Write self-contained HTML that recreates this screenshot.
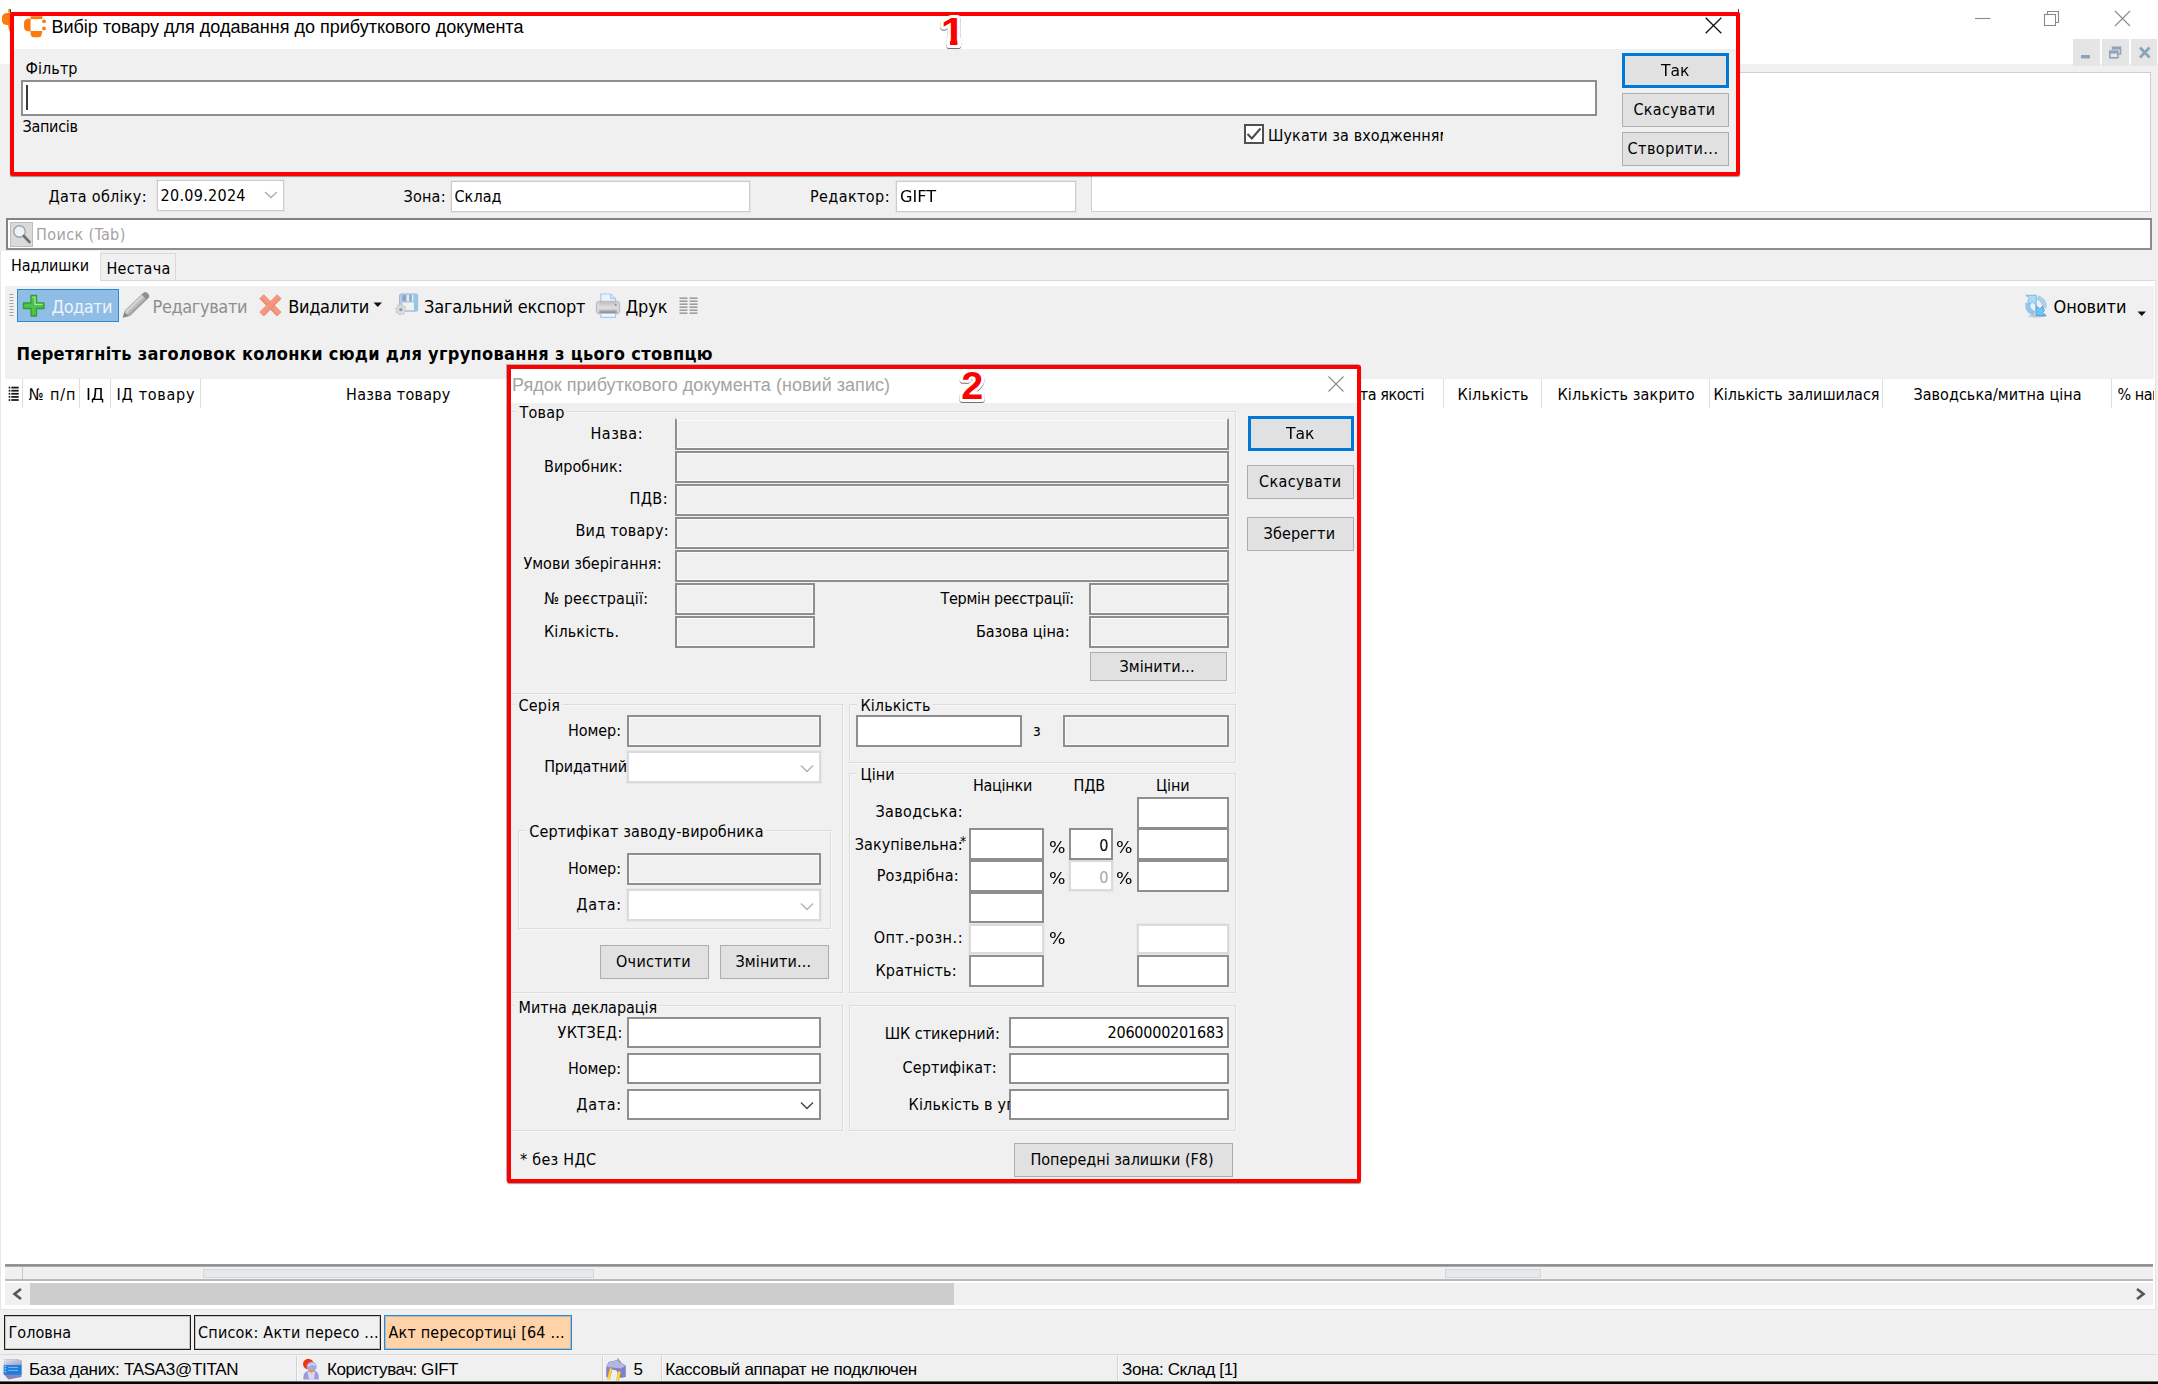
<!DOCTYPE html>
<html lang="uk"><head><meta charset="utf-8"><title>Акт пересортиці</title>
<style>
html,body{margin:0;padding:0}
body{width:2158px;height:1384px;overflow:hidden;background:#f0f0f0;position:relative;font-family:"DejaVu Sans Condensed","DejaVu Sans","Liberation Sans",sans-serif;font-stretch:condensed}
#main,#d1,#d2{position:absolute;left:0;top:0;width:2158px;height:1384px;overflow:hidden}
#main div,#d1 div,#d2 div{position:absolute;box-sizing:border-box}
svg{position:absolute;overflow:visible}
.t{white-space:pre;line-height:20px;height:20px}
.btn{background:#e1e1e1;border:1px solid #adadad}
.btnf{background:#e1e1e1;border:3px solid #0078d7}
.ro{background:#f0f0f0;border:2px solid #8e8e8e;box-shadow:inset 0 0 0 1px #fbfbfb}
.ed{background:#fff;border:2px solid #8e8e8e}
.edl{background:#fff;border:1px solid #cbcbcb;box-shadow:0 0 0 1px rgba(0,0,0,.035)}
#d2 .edl{border:2px solid #dbdbdb}
.grp{border:1px solid #dcdcdc;box-shadow:inset 1px 1px 0 rgba(255,255,255,.45), 1px 1px 0 rgba(255,255,255,.45)}
.gl{background:#f0f0f0}
.num{font-family:'Liberation Sans',sans-serif;font-weight:bold;color:#fe0000;-webkit-text-stroke:6px #fff;paint-order:stroke fill;filter:drop-shadow(0 1px .5px rgba(0,0,0,.5))}

</style></head>
<body>
<div id="main">
<div style="left:0px;top:0px;width:2158px;height:64px;background:#fff"></div>
<svg style="left:1px;top:8px" width="12" height="36" viewBox="0 0 12 36" fill="#ff7a0e"><path d="M9 5 V17 H5 Q1 16 1 12.500 V9.500 Q1 6 5 5 Z"/><path d="M7.200 17 H9 V23.500 Q7.500 22 7.200 17 Z"/><path d="M7.500 1 H9 V4.500 H7.200 Z"/></svg>
<div style="left:10px;top:9px;width:1px;height:4px;background:#444"></div>
<div style="left:1738px;top:9px;width:1px;height:4px;background:#444"></div>
<svg style="left:1970px;top:6px" width="170" height="26" viewBox="0 0 170 26" fill="none" stroke="#8a8a8a" stroke-width="1.1"><path d="M5 12.5 H20.5"/><path d="M77.5 8.5 V5.5 H88.5 V16.5 H85.5"/><rect x="74.500" y="8.5" width="11" height="11"/><path d="M145 5 L160 20 M160 5 L145 20"/></svg>
<div style="left:2073px;top:39px;width:27px;height:27px;background:#e5e5e5"></div>
<div style="left:2102px;top:39px;width:27px;height:27px;background:#e5e5e5"></div>
<div style="left:2131px;top:39px;width:26px;height:27px;background:#e5e5e5"></div>
<svg style="left:2073px;top:39px" width="84" height="27" viewBox="0 0 84 27"><rect x="8" y="16" width="9" height="3.4" fill="#8ea2b8"/><g fill="none" stroke="#8ea2b8" stroke-width="1.6"><path d="M39.500 10.500 V8.200 H47.500 V15 H45.500"/><path d="M39.500 9.300 H47.500" stroke-width="2.6"/><rect x="36.800" y="12.200" width="8" height="6.600"/><path d="M36.800 13.200 H44.800" stroke-width="2.600"/></g><path d="M67 8.500 L76.500 18.500 M76.500 8.500 L67 18.500" stroke="#8ea2b8" stroke-width="2.800" fill="none"/></svg>
<div style="left:1091px;top:72px;width:1060px;height:140px;background:#fff;border:1px solid #cfcfcf"></div>
<div class="edl" style="left:157px;top:180px;width:127px;height:31px;"></div>
<svg style="left:264px;top:191px" width="14" height="8" viewBox="0 0 14 8"><path d="M1 1 L7 6.500 L13 1" fill="none" stroke="#ababab" stroke-width="1.300"/></svg>
<div class="edl" style="left:451px;top:181px;width:299px;height:31px;"></div>
<div class="edl" style="left:896px;top:181px;width:180px;height:31px;"></div>
<div style="left:6px;top:218px;width:2146px;height:32px;background:#fff;border:2px solid #8c8c8c;border-top-color:#838383;border-left-color:#838383"></div>
<div style="left:10px;top:222px;width:23px;height:25px;background:#dadada;border:1px solid #bdbdbd"></div>
<svg style="left:12px;top:224px" width="20" height="21" viewBox="0 0 20 21"><circle cx="7.500" cy="7.500" r="5.800" fill="#eef3fb" stroke="#9aa3ad" stroke-width="1.400"/><path d="M11.800 12 L17.500 18" stroke="#6f6f6f" stroke-width="2.600" stroke-linecap="round"/></svg>
<div style="left:1px;top:251px;width:99px;height:31px;background:#fff"></div>
<div style="left:100px;top:253px;width:76px;height:28px;background:#f0f0f0;border:1px solid #d9d9d9;border-bottom:none"></div>
<div style="left:100px;top:280px;width:2055px;height:1px;background:#d9d9d9"></div>
<div style="left:0px;top:281px;width:2155px;height:1028px;background:#fff"></div>
<div style="left:0px;top:251px;width:1px;height:1058px;background:#e6e6e6"></div>
<div style="left:2155px;top:281px;width:1px;height:1029px;background:#e3e3e3"></div>
<div style="left:0px;top:1309px;width:2156px;height:1px;background:#e3e3e3"></div>
<div style="left:5px;top:286px;width:2149px;height:93px;background:#f0f0f0"></div>
<svg style="left:9px;top:293px" width="6" height="24" viewBox="0 0 6 24"><rect x="0.500" y="1" width="4" height="1" fill="#a2a2a2"/><rect x="0.500" y="4" width="4" height="1" fill="#a2a2a2"/><rect x="0.500" y="7" width="4" height="1" fill="#a2a2a2"/><rect x="0.500" y="10" width="4" height="1" fill="#a2a2a2"/><rect x="0.500" y="13" width="4" height="1" fill="#a2a2a2"/><rect x="0.500" y="16" width="4" height="1" fill="#a2a2a2"/><rect x="0.500" y="19" width="4" height="1" fill="#a2a2a2"/><rect x="0.500" y="22" width="4" height="1" fill="#a2a2a2"/></svg>
<div style="left:17px;top:289px;width:102px;height:33px;background:#8fbde6;border:1px solid #2a8ad4"></div>
<svg style="left:22px;top:294px" width="24" height="24" viewBox="0 0 24 24"><path d="M9 1.500 H14.500 V9 H22 V14.500 H14.500 V22 H9 V14.500 H1.500 V9 H9 Z" fill="#4fc24a" stroke="#2f9e2f" stroke-width="1.300" stroke-linejoin="round"/><path d="M10.300 3 H13 V10.300 H20.500" fill="none" stroke="#a6e89f" stroke-width="1.200"/></svg>
<svg style="left:0;top:0" width="10" height="10"><defs><linearGradient id="pg" x1="0" y1="0" x2="0" y2="1"><stop offset="0" stop-color="#e4e4e4"/><stop offset="1" stop-color="#9c9c9c"/></linearGradient></defs><g transform="translate(123.200 317.200) rotate(-43.800)"><path d="M0 0 L6 -3.400 H30.500 Q34 -3.400 34 0 Q34 3.400 30.500 3.400 H6 Z" fill="url(#pg)" stroke="#9b9b9b" stroke-width=".900"/><path d="M0 0 L4.500 -2.500 V2.500 Z" fill="#858585"/><path d="M29 -3.400 H30.500 Q34 -3.400 34 0 Q34 3.400 30.500 3.400 H29 Z" fill="#8e8e8e"/></g></svg>
<svg style="left:0;top:0" width="10" height="10"><defs><linearGradient id="xg" gradientUnits="userSpaceOnUse" x1="0" y1="295" x2="0" y2="316"><stop offset="0" stop-color="#fdb5a0"/><stop offset="1" stop-color="#ee7660"/></linearGradient></defs><g fill="url(#xg)" stroke="#ea8470" stroke-width=".800"><rect x="258.150" y="302.650" width="24.500" height="5.500" transform="rotate(45 270.400 305.400)"/><rect x="258.150" y="302.650" width="24.500" height="5.500" transform="rotate(-45 270.400 305.400)"/></g></svg>
<svg style="left:373px;top:302px" width="10" height="6" viewBox="0 0 10 6"><path d="M0.500 0.500 H9 L4.750 5 Z" fill="#111"/></svg>
<svg style="left:394px;top:292px" width="26" height="26" viewBox="0 0 26 26" opacity=".820"><rect x="5.500" y="1.900" width="18.200" height="17.300" rx="1.600" fill="#a9c4e2" stroke="#95a6cc" stroke-width=".900"/><rect x="20.300" y="2.500" width="3" height="16.300" fill="#72c4e8"/><rect x="8.300" y="3" width="11.200" height="6.300" fill="#6f9bc8"/><rect x="12.500" y="3" width="2.700" height="6.300" fill="#ececec"/><rect x="17.800" y="3" width="1.500" height="6.300" fill="#e6eef6"/><rect x="8.300" y="10.600" width="11.500" height="7.600" fill="#f3f3f3"/><circle cx="6.800" cy="17.600" r="5" fill="#cfd3d6" stroke="#b9bec3" stroke-width="1.200" stroke-dasharray="2.200 1.600"/><circle cx="6.800" cy="17.600" r="3.700" fill="#d4d8db"/><circle cx="6.800" cy="17.600" r="1.700" fill="#5b8fc2"/></svg>
<svg style="left:595px;top:292px" width="27" height="27" viewBox="0 0 27 27"><defs><linearGradient id="prg" x1="0" y1="0" x2="0" y2="1"><stop offset="0" stop-color="#bcbcbc"/><stop offset=".550" stop-color="#e2e2e2"/><stop offset=".700" stop-color="#c4c4c4"/><stop offset=".920" stop-color="#7e7e7e"/><stop offset="1" stop-color="#c8c8c8"/></linearGradient></defs><path d="M5.800 10 V2 H15.500 L20.500 6.500 V10 Z" fill="#e9f3fd" stroke="#a7c9ee" stroke-width="1.200"/><path d="M15.500 2 V6.500 H20.500" fill="#cfe2f6" stroke="#a7c9ee" stroke-width="1"/><rect x="1.300" y="9.300" width="23.400" height="12.600" rx="3.200" fill="#d9d9d9" stroke="#b4b4b4" stroke-width="1"/><rect x="4.300" y="9.300" width="17.400" height="12.400" fill="url(#prg)"/><circle cx="20.800" cy="12.700" r="1" fill="#8a8a8a"/><path d="M5.800 21.300 H20.500 V25.300 H5.800 Z" fill="#edf5fe" stroke="#a7c9ee" stroke-width="1.200"/></svg>
<svg style="left:679px;top:297px" width="20" height="18" viewBox="0 0 20 18"><rect x="0.500" y="0.5" width="8" height="1.300" fill="#8c8c8c"/><rect x="10.500" y="0.5" width="8" height="1.300" fill="#8c8c8c"/><rect x="0.500" y="3.5" width="8" height="1.300" fill="#8c8c8c"/><rect x="10.500" y="3.5" width="8" height="1.300" fill="#8c8c8c"/><rect x="0.500" y="6.5" width="8" height="1.300" fill="#8c8c8c"/><rect x="10.500" y="6.5" width="8" height="1.300" fill="#8c8c8c"/><rect x="0.500" y="9.5" width="8" height="1.300" fill="#8c8c8c"/><rect x="10.500" y="9.5" width="8" height="1.300" fill="#8c8c8c"/><rect x="0.500" y="12.5" width="8" height="1.300" fill="#8c8c8c"/><rect x="10.500" y="12.5" width="8" height="1.300" fill="#8c8c8c"/><rect x="0.500" y="15.5" width="8" height="1.300" fill="#8c8c8c"/><rect x="10.500" y="15.5" width="8" height="1.300" fill="#8c8c8c"/></svg>
<svg style="left:2023px;top:293px" width="26" height="25" viewBox="0 0 26 25"><ellipse cx="14" cy="23" rx="9" ry="1.400" fill="#c9c9c9"/><path d="M11.500 20.500 Q3.500 17.500 5 10" fill="none" stroke="#93c4ec" stroke-width="5"/><path d="M2.800 2.300 H13.200 V12.300 L9.300 9 L6.800 11.500 L4.500 7.500 L6.500 5.500 Z" fill="#a8dcfb" stroke="#7fb6e6" stroke-width="1"/><path d="M14.500 4.500 Q22.500 7.500 21 15" fill="none" stroke="#93c4ec" stroke-width="5" opacity=".750"/><path d="M23.200 22.700 H13 V12.700 L16.800 16 L19.300 13.500 L21.500 17.500 L19.500 19.500 Z" fill="#66c9fb" stroke="#5d97cf" stroke-width="1"/></svg>
<svg style="left:2137px;top:311px" width="10" height="6" viewBox="0 0 10 6"><path d="M0.500 0.500 H9 L4.750 5 Z" fill="#111"/></svg>
<div style="left:22px;top:379px;width:1px;height:29px;background:#dedede"></div>
<div style="left:79px;top:379px;width:1px;height:29px;background:#dedede"></div>
<div style="left:110px;top:379px;width:1px;height:29px;background:#dedede"></div>
<div style="left:200px;top:379px;width:1px;height:29px;background:#dedede"></div>
<div style="left:594px;top:379px;width:1px;height:29px;background:#dedede"></div>
<div style="left:1443px;top:379px;width:1px;height:29px;background:#dedede"></div>
<div style="left:1541px;top:379px;width:1px;height:29px;background:#dedede"></div>
<div style="left:1709px;top:379px;width:1px;height:29px;background:#dedede"></div>
<div style="left:1882px;top:379px;width:1px;height:29px;background:#dedede"></div>
<div style="left:2111px;top:379px;width:1px;height:29px;background:#dedede"></div>
<svg style="left:8px;top:386px" width="12" height="16" viewBox="0 0 12 16"><rect x="3.300" y="0.70" width="7.400" height="1.800" fill="#1a1a1a"/><rect x="0.700" y="0.70" width="1.600" height="1.800" fill="#1a1a1a"/><rect x="3.300" y="3.80" width="7.400" height="1.800" fill="#1a1a1a"/><rect x="0.700" y="3.80" width="1.600" height="1.800" fill="#1a1a1a"/><rect x="3.300" y="6.90" width="7.400" height="1.800" fill="#1a1a1a"/><rect x="0.700" y="6.90" width="1.600" height="1.800" fill="#1a1a1a"/><rect x="3.300" y="10.00" width="7.400" height="1.800" fill="#1a1a1a"/><rect x="0.700" y="10.00" width="1.600" height="1.800" fill="#1a1a1a"/><rect x="3.300" y="13.10" width="7.400" height="1.800" fill="#1a1a1a"/><rect x="0.700" y="13.10" width="1.600" height="1.800" fill="#1a1a1a"/></svg>
<div style="left:5px;top:1264px;width:2148px;height:3px;background:linear-gradient(#9a9a9a,#8a8a8a 60%,#c4c4c4)"></div>
<div style="left:5px;top:1267px;width:2148px;height:12px;background:#f0f0f0"></div>
<div style="left:22px;top:1267px;width:1px;height:12px;background:#c9c9c9"></div>
<div style="left:203px;top:1269px;width:391px;height:9px;background:#e6e9eb;border:1px solid #d3d7da"></div>
<div style="left:1445px;top:1269px;width:96px;height:9px;background:#e6e9eb;border:1px solid #d3d7da"></div>
<div style="left:5px;top:1279px;width:2148px;height:2px;background:#b9b9b9"></div>
<div style="left:5px;top:1283px;width:2148px;height:22px;background:#f0f0f0"></div>
<div style="left:30px;top:1283px;width:924px;height:22px;background:#cdcdcd"></div>
<svg style="left:12px;top:1288px" width="11" height="12" viewBox="0 0 11 12"><path d="M9 1 L2.500 6 L9 11" fill="none" stroke="#555" stroke-width="2.600"/></svg>
<svg style="left:2135px;top:1288px" width="11" height="12" viewBox="0 0 11 12"><path d="M2 1 L8.500 6 L2 11" fill="none" stroke="#555" stroke-width="2.600"/></svg>
<div style="left:4px;top:1315px;width:187px;height:35px;background:#f0f0f0;border:1px solid #1c1c1c;box-shadow:inset 0 0 0 1px rgba(0,0,0,.18)"></div>
<div style="left:194px;top:1315px;width:187px;height:35px;background:#f0f0f0;border:1px solid #1c1c1c;box-shadow:inset 0 0 0 1px rgba(0,0,0,.18)"></div>
<div style="left:384px;top:1315px;width:188px;height:35px;background:#ffd2a8;border:1px solid #2a8ad4;box-shadow:inset 0 0 0 1px rgba(42,138,212,.35)"></div>
<div style="left:0px;top:1354px;width:2158px;height:1px;background:#dadada"></div>
<div style="left:296px;top:1356px;width:1px;height:25px;background:#d2d2d2"></div>
<div style="left:297px;top:1356px;width:1px;height:25px;background:#fafafa"></div>
<div style="left:602px;top:1356px;width:1px;height:25px;background:#d2d2d2"></div>
<div style="left:603px;top:1356px;width:1px;height:25px;background:#fafafa"></div>
<div style="left:661px;top:1356px;width:1px;height:25px;background:#d2d2d2"></div>
<div style="left:662px;top:1356px;width:1px;height:25px;background:#fafafa"></div>
<div style="left:1117px;top:1356px;width:1px;height:25px;background:#d2d2d2"></div>
<div style="left:1118px;top:1356px;width:1px;height:25px;background:#fafafa"></div>
<svg style="left:3px;top:1359px" width="20" height="22" viewBox="0 0 20 22"><defs><linearGradient id="dbt" x1="0" y1="0" x2="1" y2="1"><stop offset="0" stop-color="#e4e4fa"/><stop offset="1" stop-color="#9c9cb4"/></linearGradient></defs><path d="M1 0.600 L14.500 0.300 L18.500 1.600 V18 L5.500 20.600 L0.600 15 Z" fill="#8c80bc"/><path d="M1 0.600 L14.500 0.300 L18.500 1.600 V6.500 H1 Z" fill="url(#dbt)"/><rect x="0.800" y="6" width="17.700" height="9.700" fill="#1b7fe0"/><path d="M5 8.400 H15 M5 11.400 H15" stroke="#9bb0de" stroke-width="1"/><path d="M1.500 7.300 H3.300 M1.500 10 H3.300 M1.500 12.700 H3.300" stroke="#cfe4fb" stroke-width="1.100"/></svg>
<svg style="left:301px;top:1357px" width="20" height="24" viewBox="0 0 20 24"><circle cx="7.300" cy="7" r="5.300" fill="#ee3510"/><path d="M2.300 22.500 Q2 14.500 7 14 H14 Q18.300 14.500 17.800 22.500 Z" fill="#9a9ce0"/><path d="M6.500 15 H14 L13 22.500 H8 Z" fill="#d8d8f4"/><circle cx="10.700" cy="9.800" r="5" fill="#a3a9e6"/><path d="M7 9 Q10.500 5.500 14 8" stroke="#d4dcfa" stroke-width="1.600" fill="none"/><path d="M7.300 12.500 Q10.500 11.500 13.500 12.500 L10.300 16.500 Z" fill="#f0983e"/></svg>
<svg style="left:605px;top:1357px" width="23" height="24" viewBox="0 0 23 24"><path d="M1.300 10 L3.500 5 L12 3 L20.800 8.500 V20 L15 21 L11.500 13.500 L7.500 12.500 L4 21 L1.300 20 Z" fill="#7f80c6"/><path d="M2 10 L3.800 5.300 L12 3.300 L20.500 8.700 L16 11.500 Z" fill="#b4b6e2"/><path d="M12.500 1.500 L15.500 5.500" stroke="#666" stroke-width="1"/><path d="M6 11.500 L3.500 22.500" stroke="#f3b81c" stroke-width="3"/><path d="M6 11.500 L3.500 22.500" stroke="#fbe96a" stroke-width="1.100"/><path d="M14.500 14.500 L12.500 23.500" stroke="#f3b81c" stroke-width="3"/><path d="M14.500 14.500 L12.500 23.500" stroke="#fbe96a" stroke-width="1.100"/></svg>
<div style="left:0px;top:1381px;width:2158px;height:1px;background:#6a6a6a"></div>
<div style="left:0px;top:1382px;width:2158px;height:2px;background:#000"></div>
<div class="t" style="left:48.5px;top:187px;font-size:16px;font-family:'DejaVu Sans Condensed','DejaVu Sans','Liberation Sans',sans-serif;color:#000;letter-spacing:0.291px;">Дата обліку:</div>
<div class="t" style="left:160.5px;top:185.5px;font-size:16px;font-family:'DejaVu Sans Condensed','DejaVu Sans','Liberation Sans',sans-serif;color:#000;letter-spacing:0.29px;">20.09.2024</div>
<div class="t" style="left:403.5px;top:187px;font-size:16px;font-family:'DejaVu Sans Condensed','DejaVu Sans','Liberation Sans',sans-serif;color:#000;letter-spacing:0.219px;">Зона:</div>
<div class="t" style="left:454.5px;top:187px;font-size:16px;font-family:'DejaVu Sans Condensed','DejaVu Sans','Liberation Sans',sans-serif;color:#000;letter-spacing:0.066px;">Склад</div>
<div class="t" style="left:810.0px;top:187px;font-size:16px;font-family:'DejaVu Sans Condensed','DejaVu Sans','Liberation Sans',sans-serif;color:#000;letter-spacing:0.414px;">Редактор:</div>
<div class="t" style="left:899.5px;top:187px;font-size:16px;font-family:'DejaVu Sans Condensed','DejaVu Sans','Liberation Sans',sans-serif;color:#000;transform:scaleX(1.118);transform-origin:0 0;">GIFT</div>
<div class="t" style="left:36.1px;top:225px;font-size:16px;font-family:'DejaVu Sans Condensed','DejaVu Sans','Liberation Sans',sans-serif;color:#a3a3a3;letter-spacing:0.365px;">Поиск (Tab)</div>
<div class="t" style="left:11.1px;top:256px;font-size:16px;font-family:'DejaVu Sans Condensed','DejaVu Sans','Liberation Sans',sans-serif;color:#000;letter-spacing:-0.211px;">Надлишки</div>
<div class="t" style="left:106.5px;top:258.75px;font-size:16px;font-family:'DejaVu Sans Condensed','DejaVu Sans','Liberation Sans',sans-serif;color:#000;letter-spacing:0.268px;">Нестача</div>
<div class="t" style="left:51.5px;top:297.0px;font-size:18px;font-family:'DejaVu Sans Condensed','DejaVu Sans','Liberation Sans',sans-serif;color:#eef4fb;letter-spacing:-0.528px;">Додати</div>
<div class="t" style="left:152.5px;top:297.0px;font-size:18px;font-family:'DejaVu Sans Condensed','DejaVu Sans','Liberation Sans',sans-serif;color:#8e8e8e;letter-spacing:-0.373px;">Редагувати</div>
<div class="t" style="left:288.25px;top:297.0px;font-size:18px;font-family:'DejaVu Sans Condensed','DejaVu Sans','Liberation Sans',sans-serif;color:#000;letter-spacing:-0.368px;">Видалити</div>
<div class="t" style="left:424.1px;top:297.0px;font-size:18px;font-family:'DejaVu Sans Condensed','DejaVu Sans','Liberation Sans',sans-serif;color:#000;letter-spacing:-0.18px;">Загальний експорт</div>
<div class="t" style="left:625.5px;top:297.0px;font-size:18px;font-family:'DejaVu Sans Condensed','DejaVu Sans','Liberation Sans',sans-serif;color:#000;letter-spacing:-0.104px;">Друк</div>
<div class="t" style="left:2053.5px;top:297.0px;font-size:18px;font-family:'DejaVu Sans Condensed','DejaVu Sans','Liberation Sans',sans-serif;color:#000;letter-spacing:-0.044px;">Оновити</div>
<div class="t" style="left:16.5px;top:343.9px;font-size:18px;font-family:'DejaVu Sans Condensed','DejaVu Sans','Liberation Sans',sans-serif;color:#000;font-weight:bold;letter-spacing:0.324px;">Перетягніть заголовок колонки сюди для угруповання з цього стовпцю</div>
<div class="t" style="left:28.5px;top:385px;font-size:16px;font-family:'DejaVu Sans Condensed','DejaVu Sans','Liberation Sans',sans-serif;color:#000;letter-spacing:0.941px;">№ п/п</div>
<div class="t" style="left:85.5px;top:385px;font-size:16px;font-family:'DejaVu Sans Condensed','DejaVu Sans','Liberation Sans',sans-serif;color:#000;transform:scaleX(1.161);transform-origin:0 0;">ІД</div>
<div class="t" style="left:116.5px;top:385px;font-size:16px;font-family:'DejaVu Sans Condensed','DejaVu Sans','Liberation Sans',sans-serif;color:#000;letter-spacing:0.723px;">ІД товару</div>
<div class="t" style="left:346.1px;top:385px;font-size:16px;font-family:'DejaVu Sans Condensed','DejaVu Sans','Liberation Sans',sans-serif;color:#000;letter-spacing:0.257px;">Назва товару</div>
<div class="t" style="left:1340.5px;top:385px;font-size:16px;font-family:'DejaVu Sans Condensed','DejaVu Sans','Liberation Sans',sans-serif;color:#000;letter-spacing:-0.43px;">Дата якості</div>
<div class="t" style="left:1457.5px;top:385px;font-size:16px;font-family:'DejaVu Sans Condensed','DejaVu Sans','Liberation Sans',sans-serif;color:#000;letter-spacing:0.201px;">Кількість</div>
<div class="t" style="left:1557.5px;top:385px;font-size:16px;font-family:'DejaVu Sans Condensed','DejaVu Sans','Liberation Sans',sans-serif;color:#000;letter-spacing:0.137px;">Кількість закрито</div>
<div class="t" style="left:1713.5px;top:385px;font-size:16px;font-family:'DejaVu Sans Condensed','DejaVu Sans','Liberation Sans',sans-serif;color:#000;letter-spacing:-0.006px;">Кількість залишилася</div>
<div class="t" style="left:1913.5px;top:385px;font-size:16px;font-family:'DejaVu Sans Condensed','DejaVu Sans','Liberation Sans',sans-serif;color:#000;letter-spacing:0.027px;">Заводська/митна ціна</div>
<div class="t" style="left:2117.5px;top:385px;font-size:16px;font-family:'DejaVu Sans Condensed','DejaVu Sans','Liberation Sans',sans-serif;color:#000;letter-spacing:-0.469px;width:36px;overflow:hidden;">% націнки</div>
<div class="t" style="left:8.5px;top:1322.5px;font-size:16px;font-family:'DejaVu Sans Condensed','DejaVu Sans','Liberation Sans',sans-serif;color:#000;letter-spacing:0.031px;">Головна</div>
<div class="t" style="left:198.0px;top:1322.5px;font-size:16px;font-family:'DejaVu Sans Condensed','DejaVu Sans','Liberation Sans',sans-serif;color:#000;letter-spacing:0.214px;">Список: Акти пересо ...</div>
<div class="t" style="left:388.5px;top:1322.5px;font-size:16px;font-family:'DejaVu Sans Condensed','DejaVu Sans','Liberation Sans',sans-serif;color:#000;letter-spacing:0.185px;">Акт пересортиці [64 ...</div>
<div class="t" style="left:29.0px;top:1360px;font-size:17px;font-family:'Liberation Sans',sans-serif;color:#000;letter-spacing:-0.309px;">База даних: TASA3@TITAN</div>
<div class="t" style="left:327.0px;top:1360px;font-size:17px;font-family:'Liberation Sans',sans-serif;color:#000;letter-spacing:-0.449px;">Користувач: GIFT</div>
<div class="t" style="left:633.5px;top:1360px;font-size:17px;font-family:'Liberation Sans',sans-serif;color:#000;">5</div>
<div class="t" style="left:665.25px;top:1360px;font-size:17px;font-family:'Liberation Sans',sans-serif;color:#000;letter-spacing:-0.258px;">Кассовый аппарат не подключен</div>
<div class="t" style="left:1122.0px;top:1360px;font-size:17px;font-family:'Liberation Sans',sans-serif;color:#000;letter-spacing:-0.382px;">Зона: Склад [1]</div>
</div>
<div id="d1">
<div style="left:14px;top:16px;width:1722px;height:33px;background:#fff"></div>
<div style="left:14px;top:49px;width:1722px;height:123px;background:#f0f0f0"></div>
<div style="left:10px;top:12px;width:1730px;height:164px;border-radius:2px;border:4px solid #fe0000;box-shadow:0 1px 1px rgba(30,60,60,.5)"></div>
<svg style="left:23px;top:15px" width="24" height="24" viewBox="0 0 24 24" fill="#ff7a0e"><path d="M7.600 3.800 V16.200 H4.500 Q1 15.500 1 12 V8 Q1 4.500 4.500 3.800 Z"/><rect x="7.500" y="1.200" width="11.800" height="2.900"/><path d="M7.300 16 H19.300 L18.600 20 Q18 22.200 16 22.200 H10.500 Q8.200 22.200 7.800 20 Z"/><circle cx="21" cy="6.300" r="1.900"/><circle cx="21" cy="13.500" r="1.900"/></svg>
<svg style="left:1705px;top:17px" width="17" height="17" viewBox="0 0 17 17"><path d="M0.700 0.700 L16.300 16.300 M16.300 0.700 L0.700 16.300" stroke="#111" stroke-width="1.300" fill="none"/></svg>
<svg style="left:920px;top:0" width="80" height="60" viewBox="0 0 80 60"><defs><clipPath id="k1a"><path d="M-10 -40 H40 V-7.800 H17.800 V0.200 Q17.800 3.200 14.800 3.200 H8 Q5 3.200 5 0.200 V-7.800 H-10 Z"/></clipPath><clipPath id="k1b"><path d="M-10 -40 H40 V-4.600 H14.600 V1 H8.200 V-4.600 H-10 Z"/></clipPath></defs><g style="filter:drop-shadow(0 1px .5px rgba(0,0,0,.55))" font-family="Liberation Sans, sans-serif" font-weight="bold" font-size="38"><g transform="translate(20.640 45) scale(1.150 1)"><text x="0" y="0" fill="#fff" stroke="#fff" stroke-width="6" stroke-linejoin="round" clip-path="url(#k1a)">1</text></g></g><g font-family="Liberation Sans, sans-serif" font-weight="bold" font-size="38"><g transform="translate(20.640 45) scale(1.150 1)"><text x="0" y="0" fill="#fe0000" clip-path="url(#k1b)">1</text></g></g></svg>
<div class="ed" style="left:21px;top:80px;width:1576px;height:36px;"></div>
<div style="left:26px;top:85px;width:2px;height:25px;background:#3a3a3a"></div>
<div style="left:1244px;top:124px;width:20px;height:20px;background:#fff;border:2px solid #505050"></div>
<svg style="left:1246px;top:127px" width="16" height="14" viewBox="0 0 16 14"><path d="M1.500 7 L5.800 11.500 L14.500 1.500" fill="none" stroke="#4a4a4a" stroke-width="2"/></svg>
<div class="btnf" style="left:1622px;top:53px;width:107px;height:35px;"></div>
<div class="btn" style="left:1622px;top:93px;width:107px;height:34px;"></div>
<div class="btn" style="left:1622px;top:132px;width:107px;height:34px;"></div>
<div class="t" style="left:51.5px;top:17px;font-size:18px;font-family:'Liberation Sans',sans-serif;color:#000;">Вибір товару для додавання до прибуткового документа</div>
<div class="t" style="left:25.5px;top:59px;font-size:16px;font-family:'DejaVu Sans Condensed','DejaVu Sans','Liberation Sans',sans-serif;color:#000;letter-spacing:0.078px;">Фільтр</div>
<div class="t" style="left:22.5px;top:116.5px;font-size:16px;font-family:'DejaVu Sans Condensed','DejaVu Sans','Liberation Sans',sans-serif;color:#000;letter-spacing:-0.286px;">Записів</div>
<div class="t" style="left:1268.0px;top:125.5px;font-size:16px;font-family:'DejaVu Sans Condensed','DejaVu Sans','Liberation Sans',sans-serif;color:#000;letter-spacing:0.091px;width:174.5px;overflow:hidden;">Шукати за входженням</div>
<div class="t" style="left:1660.5px;top:61px;font-size:16px;font-family:'DejaVu Sans Condensed','DejaVu Sans','Liberation Sans',sans-serif;color:#000;transform:scaleX(1.083);transform-origin:0 0;">Так</div>
<div class="t" style="left:1633.5px;top:100px;font-size:16px;font-family:'DejaVu Sans Condensed','DejaVu Sans','Liberation Sans',sans-serif;color:#000;letter-spacing:0.307px;">Скасувати</div>
<div class="t" style="left:1627.5px;top:138.75px;font-size:16px;font-family:'DejaVu Sans Condensed','DejaVu Sans','Liberation Sans',sans-serif;color:#000;letter-spacing:0.483px;">Створити...</div>
</div>
<div id="d2">
<div style="left:511px;top:369px;width:846px;height:34px;background:#fff"></div>
<div style="left:511px;top:403px;width:846px;height:777px;background:#f0f0f0"></div>
<svg style="left:1328px;top:376px" width="16" height="16" viewBox="0 0 16 16"><path d="M0.500 0.500 L15.500 15.500 M15.500 0.500 L0.500 15.500" stroke="#8c8c8c" stroke-width="1.200" fill="none"/></svg>
<svg style="left:940px;top:354px" width="80" height="60" viewBox="0 0 80 60"><g font-family="Liberation Sans, sans-serif" font-weight="bold" font-size="38" transform="translate(21.300 45) scale(1.040 1)"><text x="0" y="0" fill="#fff" stroke="#fff" stroke-width="6" stroke-linejoin="round" style="filter:drop-shadow(0 1px .5px rgba(0,0,0,.55))">2</text><text x="0" y="0" fill="#fe0000">2</text></g></svg>
<div class="grp" style="left:509px;top:411px;width:727px;height:283px;"></div>
<div class="gl" style="left:516px;top:410px;width:50px;height:3px;"></div>
<div class="ro" style="left:675px;top:418px;width:554px;height:32px;border-top-color:#f0f0f0"></div>
<div class="ro" style="left:675px;top:451px;width:554px;height:32px;"></div>
<div class="ro" style="left:675px;top:484px;width:554px;height:32px;"></div>
<div class="ro" style="left:675px;top:517px;width:554px;height:32px;"></div>
<div class="ro" style="left:675px;top:550px;width:554px;height:32px;"></div>
<div class="ro" style="left:675px;top:583px;width:140px;height:32px;"></div>
<div class="ro" style="left:675px;top:616px;width:140px;height:32px;"></div>
<div class="ro" style="left:1089px;top:583px;width:140px;height:32px;"></div>
<div class="ro" style="left:1089px;top:616px;width:140px;height:32px;"></div>
<div class="btn" style="left:1090px;top:652px;width:137px;height:29px;"></div>
<div class="btnf" style="left:1248px;top:416px;width:106px;height:35px;"></div>
<div class="btn" style="left:1247px;top:465px;width:107px;height:34px;"></div>
<div class="btn" style="left:1247px;top:517px;width:107px;height:34px;"></div>
<div class="grp" style="left:509px;top:704px;width:334px;height:289px;"></div>
<div class="gl" style="left:515px;top:703px;width:46.5px;height:3px;"></div>
<div class="ro" style="left:627px;top:715px;width:194px;height:32px;"></div>
<div class="edl" style="left:627px;top:751px;width:194px;height:32px;"></div>
<svg style="left:800px;top:764px" width="14" height="9" viewBox="0 0 14 9"><path d="M1 1.500 L7 7.500 L13 1.500" fill="none" stroke="#b0b0b0" stroke-width="1.300"/></svg>
<div class="grp" style="left:518px;top:830px;width:313px;height:99px;"></div>
<div class="gl" style="left:525.75px;top:829px;width:239.25px;height:3px;"></div>
<div class="ro" style="left:627px;top:853px;width:194px;height:32px;"></div>
<div class="edl" style="left:627px;top:889px;width:194px;height:32px;"></div>
<svg style="left:800px;top:902px" width="14" height="9" viewBox="0 0 14 9"><path d="M1 1.500 L7 7.500 L13 1.500" fill="none" stroke="#b0b0b0" stroke-width="1.300"/></svg>
<div class="btn" style="left:600px;top:945px;width:109px;height:34px;"></div>
<div class="btn" style="left:720px;top:945px;width:109px;height:34px;"></div>
<div class="grp" style="left:849px;top:704px;width:387px;height:59px;"></div>
<div class="gl" style="left:857px;top:703px;width:75px;height:3px;"></div>
<div class="ed" style="left:856px;top:715px;width:166px;height:32px;"></div>
<div class="ro" style="left:1063px;top:715px;width:166px;height:32px;"></div>
<div class="grp" style="left:849px;top:773px;width:387px;height:220px;"></div>
<div class="gl" style="left:857px;top:772px;width:39px;height:3px;"></div>
<div class="ed" style="left:969px;top:828px;width:75px;height:32px;"></div>
<div class="ed" style="left:969px;top:860px;width:75px;height:32px;"></div>
<div class="ed" style="left:969px;top:892px;width:75px;height:31px;"></div>
<div class="edl" style="left:969px;top:924px;width:75px;height:30px;"></div>
<div class="ed" style="left:969px;top:955px;width:75px;height:32px;"></div>
<div class="ed" style="left:1137px;top:797px;width:92px;height:32px;"></div>
<div class="ed" style="left:1137px;top:828px;width:92px;height:32px;"></div>
<div class="ed" style="left:1137px;top:860px;width:92px;height:32px;"></div>
<div class="edl" style="left:1137px;top:924px;width:92px;height:30px;"></div>
<div class="ed" style="left:1137px;top:955px;width:92px;height:32px;"></div>
<div class="ed" style="left:1069px;top:828px;width:44px;height:32px;"></div>
<div class="edl" style="left:1069px;top:860px;width:44px;height:31px;"></div>
<div class="grp" style="left:509px;top:1005px;width:334px;height:126px;"></div>
<div class="gl" style="left:515px;top:1004px;width:143.75px;height:3px;"></div>
<div class="ed" style="left:627px;top:1017px;width:194px;height:31px;"></div>
<div class="ed" style="left:627px;top:1053px;width:194px;height:31px;"></div>
<div class="ed" style="left:627px;top:1089px;width:194px;height:31px;"></div>
<svg style="left:800px;top:1101px" width="14" height="9" viewBox="0 0 14 9"><path d="M1 1.500 L7 7.500 L13 1.500" fill="none" stroke="#444" stroke-width="1.400"/></svg>
<div class="grp" style="left:849px;top:1005px;width:387px;height:126px;"></div>
<div class="ed" style="left:1009px;top:1017px;width:220px;height:31px;"></div>
<div class="ed" style="left:1009px;top:1053px;width:220px;height:31px;"></div>
<div class="ed" style="left:1009px;top:1089px;width:220px;height:31px;"></div>
<div class="btn" style="left:1014px;top:1143px;width:219px;height:34px;"></div>
<div style="left:507px;top:365px;width:854px;height:818px;border-radius:0 2px 2px 2px;border:4px solid #fe0000;box-shadow:0 1px 1px rgba(30,60,60,.5),-1px -1px 0 rgba(60,90,90,.4)"></div>
<div class="t" style="left:512.0px;top:374.5px;font-size:18px;font-family:'Liberation Sans',sans-serif;color:#a4a4a4;letter-spacing:0.034px;">Рядок прибуткового документа (новий запис)</div>
<div class="t" style="left:519.5px;top:403px;font-size:16px;font-family:'DejaVu Sans Condensed','DejaVu Sans','Liberation Sans',sans-serif;color:#000;letter-spacing:0.238px;">Товар</div>
<div class="t" style="left:590.5px;top:423.5px;font-size:16px;font-family:'DejaVu Sans Condensed','DejaVu Sans','Liberation Sans',sans-serif;color:#000;letter-spacing:0.506px;">Назва:</div>
<div class="t" style="left:544.0px;top:456.75px;font-size:16px;font-family:'DejaVu Sans Condensed','DejaVu Sans','Liberation Sans',sans-serif;color:#000;letter-spacing:0.018px;">Виробник:</div>
<div class="t" style="left:629.5px;top:488.5px;font-size:16px;font-family:'DejaVu Sans Condensed','DejaVu Sans','Liberation Sans',sans-serif;color:#000;letter-spacing:0.396px;">ПДВ:</div>
<div class="t" style="left:575.5px;top:521px;font-size:16px;font-family:'DejaVu Sans Condensed','DejaVu Sans','Liberation Sans',sans-serif;color:#000;letter-spacing:0.225px;">Вид товару:</div>
<div class="t" style="left:523.5px;top:554px;font-size:16px;font-family:'DejaVu Sans Condensed','DejaVu Sans','Liberation Sans',sans-serif;color:#000;letter-spacing:-0.006px;">Умови зберігання:</div>
<div class="t" style="left:544.0px;top:588.5px;font-size:16px;font-family:'DejaVu Sans Condensed','DejaVu Sans','Liberation Sans',sans-serif;color:#000;letter-spacing:0.137px;">№ реєстрації:</div>
<div class="t" style="left:544.0px;top:621.5px;font-size:16px;font-family:'DejaVu Sans Condensed','DejaVu Sans','Liberation Sans',sans-serif;color:#000;letter-spacing:0.116px;">Кількість.</div>
<div class="t" style="left:940.5px;top:588.5px;font-size:16px;font-family:'DejaVu Sans Condensed','DejaVu Sans','Liberation Sans',sans-serif;color:#000;letter-spacing:-0.29px;">Термін реєстрації:</div>
<div class="t" style="left:976.0px;top:621.5px;font-size:16px;font-family:'DejaVu Sans Condensed','DejaVu Sans','Liberation Sans',sans-serif;color:#000;letter-spacing:-0.038px;">Базова ціна:</div>
<div class="t" style="left:1119.5px;top:657px;font-size:16px;font-family:'DejaVu Sans Condensed','DejaVu Sans','Liberation Sans',sans-serif;color:#000;letter-spacing:0.078px;">Змінити...</div>
<div class="t" style="left:1285.5px;top:423.5px;font-size:16px;font-family:'DejaVu Sans Condensed','DejaVu Sans','Liberation Sans',sans-serif;color:#000;transform:scaleX(1.083);transform-origin:0 0;">Так</div>
<div class="t" style="left:1259.0px;top:471.5px;font-size:16px;font-family:'DejaVu Sans Condensed','DejaVu Sans','Liberation Sans',sans-serif;color:#000;letter-spacing:0.369px;">Скасувати</div>
<div class="t" style="left:1263.5px;top:524px;font-size:16px;font-family:'DejaVu Sans Condensed','DejaVu Sans','Liberation Sans',sans-serif;color:#000;letter-spacing:0.176px;">Зберегти</div>
<div class="t" style="left:518.5px;top:696px;font-size:16px;font-family:'DejaVu Sans Condensed','DejaVu Sans','Liberation Sans',sans-serif;color:#000;letter-spacing:0.195px;">Серія</div>
<div class="t" style="left:568.0px;top:720.5px;font-size:16px;font-family:'DejaVu Sans Condensed','DejaVu Sans','Liberation Sans',sans-serif;color:#000;letter-spacing:-0.069px;">Номер:</div>
<div class="t" style="left:544.25px;top:757px;font-size:16px;font-family:'DejaVu Sans Condensed','DejaVu Sans','Liberation Sans',sans-serif;color:#000;letter-spacing:-0.23px;width:83px;overflow:hidden;">Придатний до:</div>
<div class="t" style="left:529.25px;top:822px;font-size:16px;font-family:'DejaVu Sans Condensed','DejaVu Sans','Liberation Sans',sans-serif;color:#000;letter-spacing:0.127px;">Сертифікат заводу-виробника</div>
<div class="t" style="left:568.0px;top:858.75px;font-size:16px;font-family:'DejaVu Sans Condensed','DejaVu Sans','Liberation Sans',sans-serif;color:#000;letter-spacing:-0.069px;">Номер:</div>
<div class="t" style="left:576.25px;top:895px;font-size:16px;font-family:'DejaVu Sans Condensed','DejaVu Sans','Liberation Sans',sans-serif;color:#000;letter-spacing:0.656px;">Дата:</div>
<div class="t" style="left:616.0px;top:952px;font-size:16px;font-family:'DejaVu Sans Condensed','DejaVu Sans','Liberation Sans',sans-serif;color:#000;letter-spacing:0.275px;">Очистити</div>
<div class="t" style="left:735.5px;top:952px;font-size:16px;font-family:'DejaVu Sans Condensed','DejaVu Sans','Liberation Sans',sans-serif;color:#000;letter-spacing:0.134px;">Змінити...</div>
<div class="t" style="left:860.5px;top:696px;font-size:16px;font-family:'DejaVu Sans Condensed','DejaVu Sans','Liberation Sans',sans-serif;color:#000;letter-spacing:0.076px;">Кількість</div>
<div class="t" style="left:1033.0px;top:721px;font-size:16px;font-family:'DejaVu Sans Condensed','DejaVu Sans','Liberation Sans',sans-serif;color:#000;">з</div>
<div class="t" style="left:860.5px;top:765.25px;font-size:16px;font-family:'DejaVu Sans Condensed','DejaVu Sans','Liberation Sans',sans-serif;color:#000;letter-spacing:0.016px;">Ціни</div>
<div class="t" style="left:973.0px;top:776px;font-size:16px;font-family:'DejaVu Sans Condensed','DejaVu Sans','Liberation Sans',sans-serif;color:#000;letter-spacing:-0.276px;">Націнки</div>
<div class="t" style="left:1073.5px;top:776px;font-size:16px;font-family:'DejaVu Sans Condensed','DejaVu Sans','Liberation Sans',sans-serif;color:#000;letter-spacing:-0.102px;">ПДВ</div>
<div class="t" style="left:1156.0px;top:776px;font-size:16px;font-family:'DejaVu Sans Condensed','DejaVu Sans','Liberation Sans',sans-serif;color:#000;letter-spacing:-0.151px;">Ціни</div>
<div class="t" style="left:875.5px;top:802px;font-size:16px;font-family:'DejaVu Sans Condensed','DejaVu Sans','Liberation Sans',sans-serif;color:#000;letter-spacing:0.326px;">Заводська:</div>
<div class="t" style="left:854.75px;top:835px;font-size:16px;font-family:'DejaVu Sans Condensed','DejaVu Sans','Liberation Sans',sans-serif;color:#000;letter-spacing:0.079px;">Закупівельна:</div>
<div class="t" style="left:960.0px;top:831px;font-size:14px;font-family:'DejaVu Sans Condensed','DejaVu Sans','Liberation Sans',sans-serif;color:#000;">*</div>
<div class="t" style="left:876.75px;top:866.25px;font-size:16px;font-family:'DejaVu Sans Condensed','DejaVu Sans','Liberation Sans',sans-serif;color:#000;letter-spacing:0.172px;">Роздрібна:</div>
<div class="t" style="left:873.75px;top:927.5px;font-size:16px;font-family:'DejaVu Sans Condensed','DejaVu Sans','Liberation Sans',sans-serif;color:#000;letter-spacing:0.542px;">Опт.-розн.:</div>
<div class="t" style="left:875.5px;top:960.5px;font-size:16px;font-family:'DejaVu Sans Condensed','DejaVu Sans','Liberation Sans',sans-serif;color:#000;letter-spacing:0.155px;">Кратність:</div>
<div class="t" style="left:1099.25px;top:836px;font-size:16px;font-family:'DejaVu Sans Condensed','DejaVu Sans','Liberation Sans',sans-serif;color:#000;">0</div>
<div class="t" style="left:1099.25px;top:867.5px;font-size:16px;font-family:'DejaVu Sans Condensed','DejaVu Sans','Liberation Sans',sans-serif;color:#a8a8a8;">0</div>
<div class="t" style="left:1049.25px;top:837.5px;font-size:16px;font-family:'DejaVu Sans Condensed','DejaVu Sans','Liberation Sans',sans-serif;color:#000;transform:scaleX(1.205);transform-origin:0 0;">%</div>
<div class="t" style="left:1116.25px;top:837.5px;font-size:16px;font-family:'DejaVu Sans Condensed','DejaVu Sans','Liberation Sans',sans-serif;color:#000;transform:scaleX(1.205);transform-origin:0 0;">%</div>
<div class="t" style="left:1049.25px;top:869px;font-size:16px;font-family:'DejaVu Sans Condensed','DejaVu Sans','Liberation Sans',sans-serif;color:#000;transform:scaleX(1.205);transform-origin:0 0;">%</div>
<div class="t" style="left:1116.25px;top:869px;font-size:16px;font-family:'DejaVu Sans Condensed','DejaVu Sans','Liberation Sans',sans-serif;color:#000;transform:scaleX(1.205);transform-origin:0 0;">%</div>
<div class="t" style="left:1049.25px;top:929px;font-size:16px;font-family:'DejaVu Sans Condensed','DejaVu Sans','Liberation Sans',sans-serif;color:#000;transform:scaleX(1.205);transform-origin:0 0;">%</div>
<div class="t" style="left:518.5px;top:998px;font-size:16px;font-family:'DejaVu Sans Condensed','DejaVu Sans','Liberation Sans',sans-serif;color:#000;letter-spacing:-0.01px;">Митна декларація</div>
<div class="t" style="left:557.5px;top:1023.25px;font-size:16px;font-family:'DejaVu Sans Condensed','DejaVu Sans','Liberation Sans',sans-serif;color:#000;letter-spacing:0.424px;">УКТЗЕД:</div>
<div class="t" style="left:568.0px;top:1058.75px;font-size:16px;font-family:'DejaVu Sans Condensed','DejaVu Sans','Liberation Sans',sans-serif;color:#000;letter-spacing:-0.069px;">Номер:</div>
<div class="t" style="left:576.25px;top:1095px;font-size:16px;font-family:'DejaVu Sans Condensed','DejaVu Sans','Liberation Sans',sans-serif;color:#000;letter-spacing:0.656px;">Дата:</div>
<div class="t" style="left:884.75px;top:1024.25px;font-size:16px;font-family:'DejaVu Sans Condensed','DejaVu Sans','Liberation Sans',sans-serif;color:#000;letter-spacing:-0.042px;">ШК стикерний:</div>
<div class="t" style="left:902.5px;top:1057.5px;font-size:16px;font-family:'DejaVu Sans Condensed','DejaVu Sans','Liberation Sans',sans-serif;color:#000;letter-spacing:0.116px;">Сертифікат:</div>
<div class="t" style="left:908.5px;top:1095px;font-size:16px;font-family:'DejaVu Sans Condensed','DejaVu Sans','Liberation Sans',sans-serif;color:#000;letter-spacing:0.164px;width:101.5px;overflow:hidden;">Кількість в упаковці:</div>
<div class="t" style="left:1107.5px;top:1023.25px;font-size:16px;font-family:'DejaVu Sans Condensed','DejaVu Sans','Liberation Sans',sans-serif;color:#000;letter-spacing:-0.211px;">2060000201683</div>
<div class="t" style="left:520.0px;top:1150px;font-size:16px;font-family:'DejaVu Sans Condensed','DejaVu Sans','Liberation Sans',sans-serif;color:#000;letter-spacing:0.268px;">* без НДС</div>
<div class="t" style="left:1030.5px;top:1150px;font-size:16px;font-family:'DejaVu Sans Condensed','DejaVu Sans','Liberation Sans',sans-serif;color:#000;letter-spacing:-0.016px;">Попередні залишки (F8)</div>
</div>
</body></html>
